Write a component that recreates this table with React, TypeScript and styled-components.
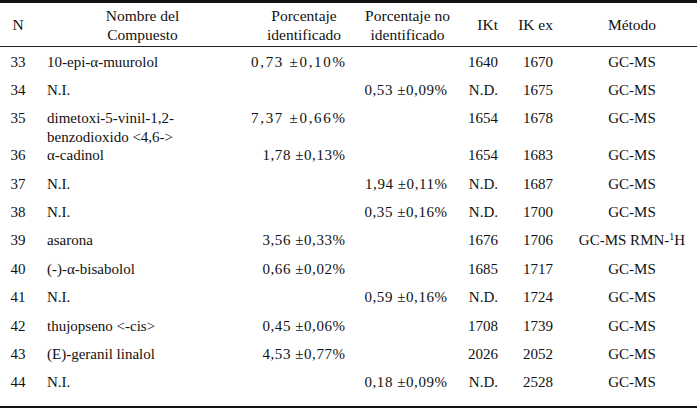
import React from "react";
import styled, { createGlobalStyle } from "styled-components";

const GlobalStyle = createGlobalStyle`
  body {
    margin: 0;
    background: #ffffff;
  }
`;

const COLUMNS = "36px 202px 124px 91px 45px 55px 144px";

type Align = "left" | "center" | "right";

interface ColSpec {
  align: Align;
  pl?: number;
  pr?: number;
}

const headSpec: ColSpec[] = [
  { align: "center" },
  { align: "center", pl: 11 },
  { align: "center", pl: 8 },
  { align: "center" },
  { align: "right" },
  { align: "right" },
  { align: "center", pl: 14 },
];

const bodySpec: ColSpec[] = [
  { align: "center" },
  { align: "left", pl: 11 },
  { align: "right", pr: 17 },
  { align: "right", pr: 6 },
  { align: "right" },
  { align: "right" },
  { align: "center", pl: 14 },
];

const Table = styled.div`
  width: 697px;
  font-family: "Liberation Serif", "Times New Roman", serif;
  font-size: 15px;
  line-height: 19px;
  color: #111;
  border-top: 3px solid #111;
  border-bottom: 2px solid #111;
`;

const HeaderRow = styled.div`
  display: grid;
  grid-template-columns: ${COLUMNS};
  align-items: center;
  height: 43px;
  border-bottom: 1px solid #222;
  font-size: 15.5px;
`;

const Body = styled.div`
  padding-bottom: 9.6px;
`;

const Row = styled.div<{ $tall?: boolean }>`
  display: grid;
  grid-template-columns: ${COLUMNS};
  align-items: start;
  box-sizing: border-box;
  height: ${({ $tall }) => ($tall ? "37px" : "28.4px")};
  padding-top: 5.5px;
`;

const Cell = styled.div<{ $align: Align; $pl?: number; $pr?: number }>`
  text-align: ${({ $align }) => $align};
  padding-left: ${({ $pl }) => $pl ?? 0}px;
  padding-right: ${({ $pr }) => $pr ?? 0}px;
  white-space: nowrap;
`;

// percentage values are set a little looser than the rest of the text
const Pct = styled.span<{ $wide?: boolean }>`
  letter-spacing: ${({ $wide }) => ($wide ? "1.7px" : "0.55px")};
  margin-right: ${({ $wide }) => ($wide ? "-1.7px" : "-0.55px")};
`;

const Sup = styled.sup`
  font-size: 10px;
  line-height: 0;
  vertical-align: 5px;
`;

const headers: React.ReactNode[] = [
  "N",
  <>Nombre del<br />Compuesto</>,
  <>Porcentaje<br />identificado</>,
  <>Porcentaje no<br />identificado</>,
  "IKt",
  "IK ex",
  "Método",
];

const gcms = "GC-MS";
const pct = (v: string, wide?: boolean) => <Pct $wide={wide}>{v}</Pct>;

const rows: { cells: React.ReactNode[]; tall?: boolean }[] = [
  { cells: ["33", "10-epi-α-muurolol", pct("0,73 ±0,10%", true), "", "1640", "1670", gcms] },
  { cells: ["34", "N.I.", "", pct("0,53 ±0,09%"), "N.D.", "1675", gcms] },
  {
    cells: ["35", <>dimetoxi-5-vinil-1,2-<br />benzodioxido &lt;4,6-&gt;</>, pct("7,37 ±0,66%", true), "", "1654", "1678", gcms],
    tall: true,
  },
  { cells: ["36", "α-cadinol", pct("1,78 ±0,13%"), "", "1654", "1683", gcms] },
  { cells: ["37", "N.I.", "", pct("1,94 ±0,11%"), "N.D.", "1687", gcms] },
  { cells: ["38", "N.I.", "", pct("0,35 ±0,16%"), "N.D.", "1700", gcms] },
  {
    cells: ["39", "asarona", pct("3,56 ±0,33%"), "", "1676", "1706", <>GC-MS RMN-<Sup>1</Sup>H</>],
  },
  { cells: ["40", "(-)-α-bisabolol", pct("0,66 ±0,02%"), "", "1685", "1717", gcms] },
  { cells: ["41", "N.I.", "", pct("0,59 ±0,16%"), "N.D.", "1724", gcms] },
  { cells: ["42", "thujopseno <-cis>", pct("0,45 ±0,06%"), "", "1708", "1739", gcms] },
  { cells: ["43", "(E)-geranil linalol", pct("4,53 ±0,77%"), "", "2026", "2052", gcms] },
  { cells: ["44", "N.I.", "", pct("0,18 ±0,09%"), "N.D.", "2528", gcms] },
];

const App: React.FC = () => {
  return (
    <>
      <GlobalStyle />
      <Table>
        <HeaderRow>
          {headers.map((h, i) => (
            <Cell key={i} $align={headSpec[i].align} $pl={headSpec[i].pl} $pr={headSpec[i].pr}>
              {h}
            </Cell>
          ))}
        </HeaderRow>
        <Body>
          {rows.map((r, ri) => (
            <Row key={ri} $tall={r.tall}>
              {r.cells.map((c, ci) => (
                <Cell key={ci} $align={bodySpec[ci].align} $pl={bodySpec[ci].pl} $pr={bodySpec[ci].pr}>
                  {c}
                </Cell>
              ))}
            </Row>
          ))}
        </Body>
      </Table>
    </>
  );
};

export default App;
